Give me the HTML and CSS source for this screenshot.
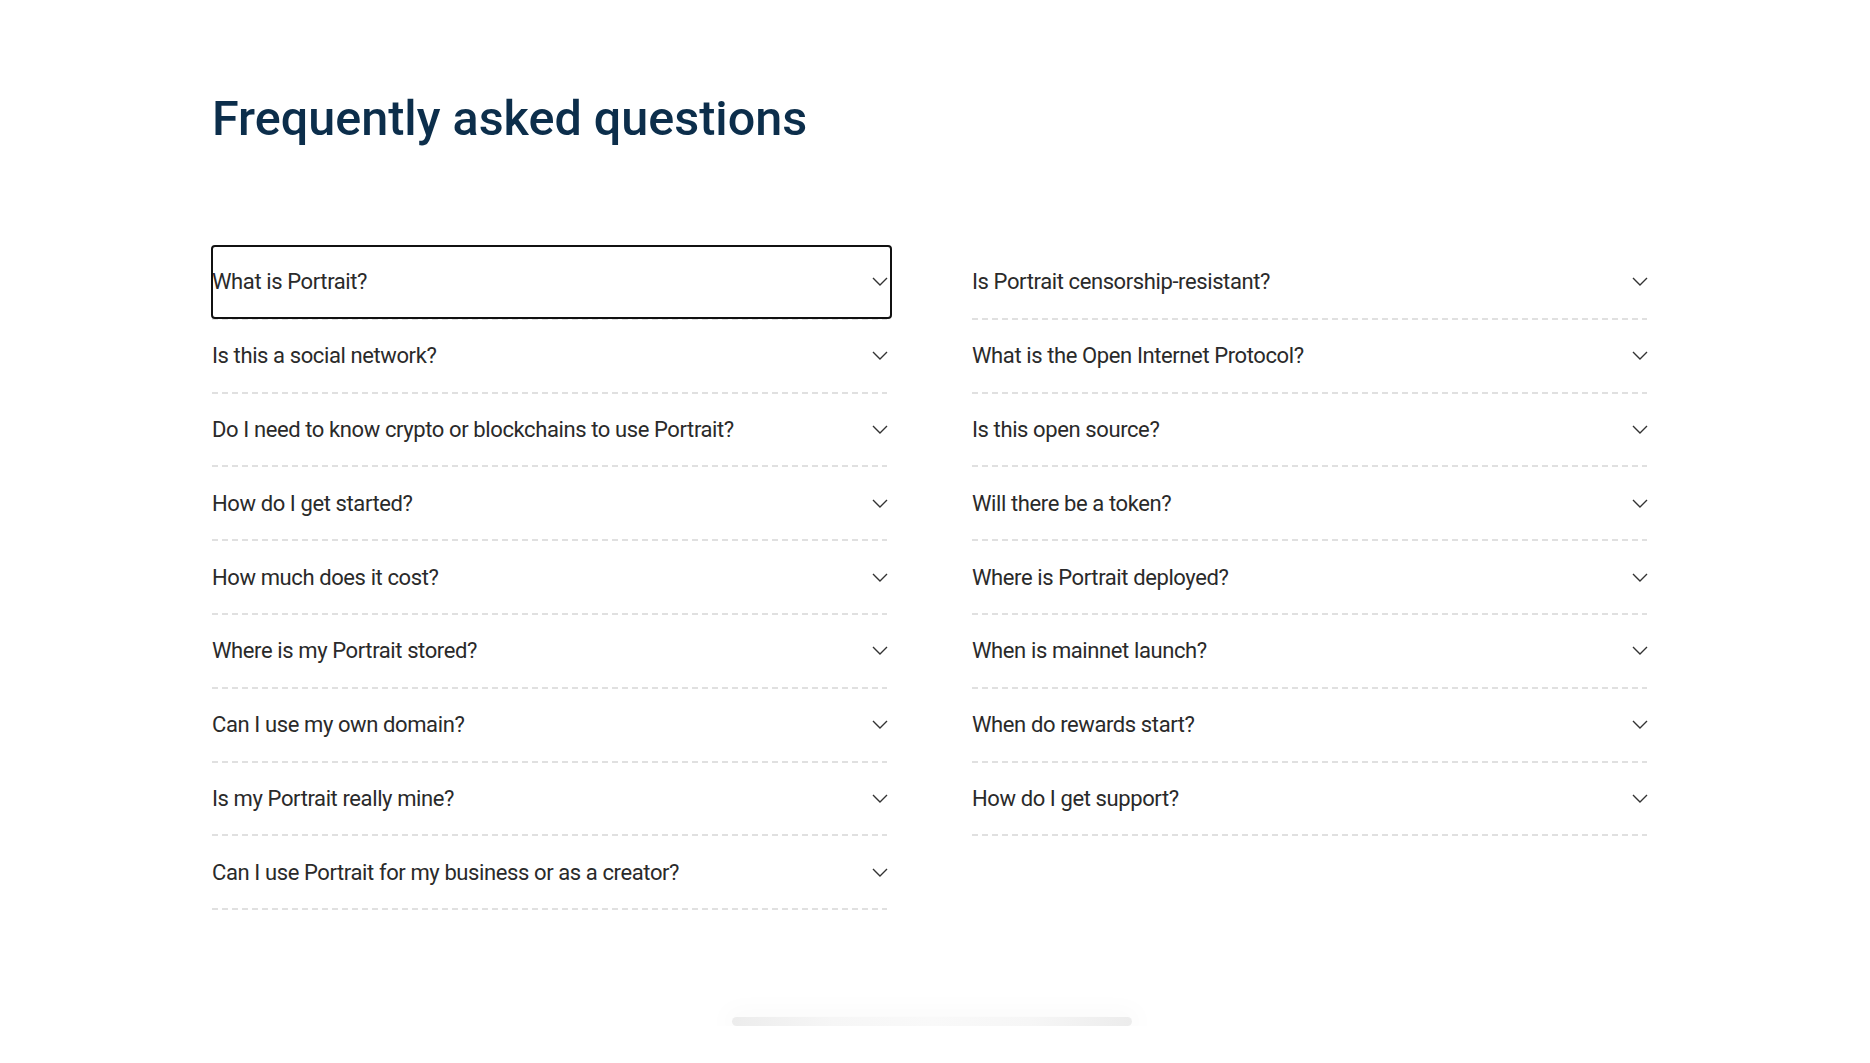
FILE: index.html
```html
<!doctype html>
<html lang="en">
  <head>
    <meta charset="utf-8">
    <meta name="viewport" content="width=device-width, initial-scale=1">
    <title>Frequently asked questions</title>
    <link rel="stylesheet" href="styles.css">
  </head>
<body>
  <section class="faq">
    <h1 class="faq-title">Frequently asked questions</h1>

    <div class="faq-columns">
      <ul class="faq-list">
        <li class="faq-item"><button class="faq-question is-focused"><span>What is Portrait?</span><svg class="chevron" viewBox="0 0 16 9"><path d="M1 1l7 7 7-7"/></svg></button></li>
        <li class="faq-item"><button class="faq-question"><span>Is this a social network?</span><svg class="chevron" viewBox="0 0 16 9"><path d="M1 1l7 7 7-7"/></svg></button></li>
        <li class="faq-item"><button class="faq-question"><span>Do I need to know crypto or blockchains to use Portrait?</span><svg class="chevron" viewBox="0 0 16 9"><path d="M1 1l7 7 7-7"/></svg></button></li>
        <li class="faq-item"><button class="faq-question"><span>How do I get started?</span><svg class="chevron" viewBox="0 0 16 9"><path d="M1 1l7 7 7-7"/></svg></button></li>
        <li class="faq-item"><button class="faq-question"><span>How much does it cost?</span><svg class="chevron" viewBox="0 0 16 9"><path d="M1 1l7 7 7-7"/></svg></button></li>
        <li class="faq-item"><button class="faq-question"><span>Where is my Portrait stored?</span><svg class="chevron" viewBox="0 0 16 9"><path d="M1 1l7 7 7-7"/></svg></button></li>
        <li class="faq-item"><button class="faq-question"><span>Can I use my own domain?</span><svg class="chevron" viewBox="0 0 16 9"><path d="M1 1l7 7 7-7"/></svg></button></li>
        <li class="faq-item"><button class="faq-question"><span>Is my Portrait really mine?</span><svg class="chevron" viewBox="0 0 16 9"><path d="M1 1l7 7 7-7"/></svg></button></li>
        <li class="faq-item"><button class="faq-question"><span>Can I use Portrait for my business or as a creator?</span><svg class="chevron" viewBox="0 0 16 9"><path d="M1 1l7 7 7-7"/></svg></button></li>
      </ul>

      <ul class="faq-list">
        <li class="faq-item"><button class="faq-question"><span>Is Portrait censorship-resistant?</span><svg class="chevron" viewBox="0 0 16 9"><path d="M1 1l7 7 7-7"/></svg></button></li>
        <li class="faq-item"><button class="faq-question"><span>What is the Open Internet Protocol?</span><svg class="chevron" viewBox="0 0 16 9"><path d="M1 1l7 7 7-7"/></svg></button></li>
        <li class="faq-item"><button class="faq-question"><span>Is this open source?</span><svg class="chevron" viewBox="0 0 16 9"><path d="M1 1l7 7 7-7"/></svg></button></li>
        <li class="faq-item"><button class="faq-question"><span>Will there be a token?</span><svg class="chevron" viewBox="0 0 16 9"><path d="M1 1l7 7 7-7"/></svg></button></li>
        <li class="faq-item"><button class="faq-question"><span>Where is Portrait deployed?</span><svg class="chevron" viewBox="0 0 16 9"><path d="M1 1l7 7 7-7"/></svg></button></li>
        <li class="faq-item"><button class="faq-question"><span>When is mainnet launch?</span><svg class="chevron" viewBox="0 0 16 9"><path d="M1 1l7 7 7-7"/></svg></button></li>
        <li class="faq-item"><button class="faq-question"><span>When do rewards start?</span><svg class="chevron" viewBox="0 0 16 9"><path d="M1 1l7 7 7-7"/></svg></button></li>
        <li class="faq-item"><button class="faq-question"><span>How do I get support?</span><svg class="chevron" viewBox="0 0 16 9"><path d="M1 1l7 7 7-7"/></svg></button></li>
      </ul>
    </div>
  </section>

  <div class="scroll-track"><div class="scroll-thumb"></div></div>
</body>
</html>
```

FILE: styles.css
```css
body {
    margin: 0;
    background: #fff;
    font-family: Roboto, "Liberation Sans", sans-serif;
    color: #2a2a2a;
}

.faq {
    width: 1435px;
    margin-left: 212px;
    padding-top: 88px;
}

.faq-title {
    margin: 0;
    font-size: 48.5px;
    line-height: 56px;
    font-weight: 500;
    letter-spacing: 0;
    color: #0c2e4b;
    transform: translateY(3px);
}

.faq-columns {
    display: grid;
    grid-template-columns: 1fr 1fr;
    column-gap: 85px;
    margin-top: 102px;
}

.faq-list {
    list-style: none;
    margin: 0;
    padding: 0;
}

.faq-item {
    padding-bottom: 2px;
    background-image: repeating-linear-gradient(to right, #e0e0e0 0 6px, transparent 6px 10px);
    background-size: 100% 2px;
    background-repeat: no-repeat;
    background-position: bottom left;
}

.faq-question {
    display: flex;
    align-items: center;
    justify-content: space-between;
    width: 100%;
    height: 71.8px;
    padding: 0;
    border: 0;
    background: none;
    font-family: inherit;
    font-size: 22px;
    letter-spacing: -0.018em;
    color: #2a2a2a;
    text-align: left;
    cursor: pointer;
}

/* keyboard focus ring on the first question */
.faq-question.is-focused {
    position: relative;
}

.faq-question.is-focused::after {
    content: "";
    position: absolute;
    left: -1px;
    right: -5px;
    top: -1px;
    bottom: -1px;
    border: 2px solid #111;
    border-radius: 4px;
}

.chevron {
    width: 16px;
    height: 9px;
    margin-right: -1px;
    fill: none;
    stroke: #333;
    stroke-width: 1.4;
}

.scroll-track {
    display: flex;
    justify-content: center;
    padding-right: 7px;
    margin-top: 107px;
}

.scroll-thumb {
    width: 400px;
    height: 9px;
    border-radius: 5px;
    background: linear-gradient(to right, #ececec, #f6f6f6 25%, #f9f9f9 50%, #f6f6f6 75%, #ececec);
    box-shadow: 0 0 24px 8px rgba(0, 0, 0, 0.025);
}
```
